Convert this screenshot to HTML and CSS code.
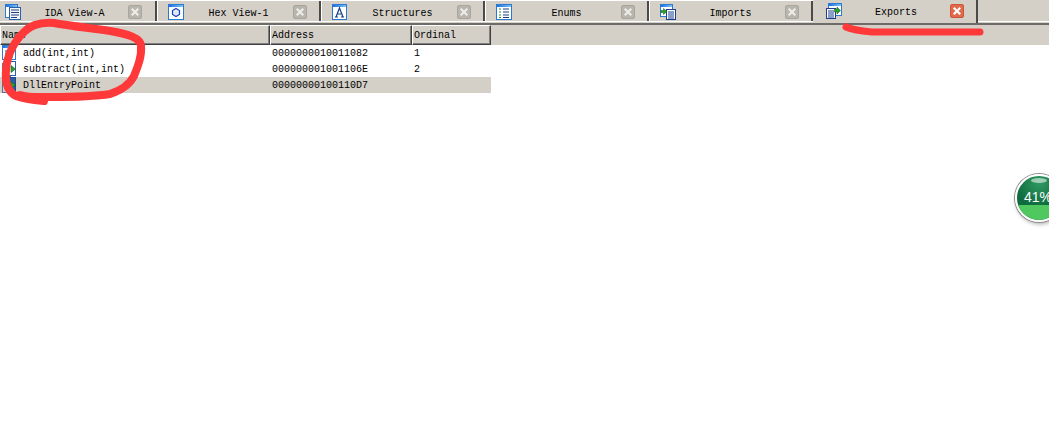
FILE: index.html
```html
<!DOCTYPE html>
<html lang="en">
<head>
<meta charset="utf-8">
<title>Exports</title>
<link rel="stylesheet" href="styles.css">
</head>
<body>
<svg class="defs" width="0" height="0"><defs>
  <linearGradient id="tb" x1="0" x2="1" y1="0" y2="0"><stop offset="0" stop-color="#1f6fe0"/><stop offset="1" stop-color="#7cc4f5"/></linearGradient>
  <symbol id="x" viewBox="0 0 12 12"><path d="M3 3l6 6M9 3l-6 6" stroke="currentColor" stroke-width="2.6" stroke-linecap="square"/></symbol>
</defs></svg>
<div class="tabs">
  <div class="tab first">
    <svg class="ico" viewBox="0 0 16 16"><rect x=".5" y=".5" width="12" height="13" fill="#fff" stroke="#2a7ad0"/><rect x="1" y="1" width="11" height="2" fill="url(#tb)"/><rect x="4.500" y="3.500" width="11" height="12" fill="#f4f8fd" stroke="#2a5fa8"/><path d="M6 6h8M6 8.500h8M6 11h8M6 13.500h6" stroke="#1f3f80"/></svg>
    <span class="label">IDA View-A</span><svg class="close" viewBox="0 0 12 12"><use href="#x"/></svg>
  </div>
  <div class="tab">
    <svg class="ico" viewBox="0 0 16 16"><rect x=".5" y=".5" width="15" height="15" fill="#fff" stroke="#2a7ad0"/><rect x="1" y="1" width="14" height="2" fill="url(#tb)"/><path d="M8 4.500l3.500 2v4L8 12.500l-3.500-2v-4z" fill="#dfe8fb" stroke="#1a3fc0" stroke-width="1.200"/></svg>
    <span class="label">Hex View-1</span><svg class="close" viewBox="0 0 12 12"><use href="#x"/></svg>
  </div>
  <div class="tab">
    <svg class="ico" viewBox="0 0 16 16"><rect x=".5" y=".5" width="14" height="15" fill="#fff" stroke="#2a7ad0"/><rect x="1" y="1" width="13" height="2" fill="url(#tb)"/><path d="M4 13L7.500 4 11 13M5.500 10h4M3 13h3M9 13h3" fill="none" stroke="#14408a" stroke-width="1.200"/></svg>
    <span class="label">Structures</span><svg class="close" viewBox="0 0 12 12"><use href="#x"/></svg>
  </div>
  <div class="tab">
    <svg class="ico" viewBox="0 0 16 16"><rect x=".5" y=".5" width="15" height="15" fill="#fff" stroke="#2a7ad0"/><rect x="1" y="1" width="14" height="2" fill="url(#tb)"/><path d="M3 5h2M3 8h2M3 11h2M3 13.500h2" stroke="#2a8a3a"/><path d="M7 5h6M7 8h6M7 11h6M7 13.500h6" stroke="#14408a"/></svg>
    <span class="label">Enums</span><svg class="close" viewBox="0 0 12 12"><use href="#x"/></svg>
  </div>
  <div class="tab">
    <svg class="ico" viewBox="0 0 16 16"><rect x=".5" y=".5" width="12" height="12" fill="#fff" stroke="#2a7ad0"/><rect x="1" y="1" width="11" height="2" fill="url(#tb)"/><rect x="6.500" y="5.500" width="9" height="10" fill="#fff" stroke="#1a3f8f"/><path d="M8 8h6M8 10h6M8 12h6M8 14h6" stroke="#1a3f8f"/><path d="M1 6.500h2.500V4.500l3.500 3-3.500 3v-2H1z" fill="#2ca02c" stroke="#145a14" stroke-width=".5"/></svg>
    <span class="label">Imports</span><svg class="close" viewBox="0 0 12 12"><use href="#x"/></svg>
  </div>
  <div class="tab active">
    <svg class="ico" viewBox="0 0 16 16"><rect x="2.500" y=".5" width="13" height="12" fill="#fff" stroke="#2a7ad0"/><rect x="3" y="1" width="12" height="2" fill="url(#tb)"/><rect x=".5" y="5.500" width="9" height="10" fill="#fff" stroke="#1a3f8f"/><path d="M2 8h6M2 10h6M2 12h6M2 14h6" stroke="#1a3f8f"/><path d="M8.500 6h2.500V4l3.500 3.500L11 11V9H8.500z" fill="#2ca02c" stroke="#145a14" stroke-width=".5"/></svg>
    <span class="label">Exports</span><svg class="close" viewBox="0 0 12 12"><use href="#x"/></svg>
  </div>
  <div class="tabs-rest"></div>
</div>
<div class="rule"></div>
<div class="table">
  <div class="row head">
    <div class="col name"><span>Name</span></div>
    <div class="col addr"><span>Address</span></div>
    <div class="col ord"><span>Ordinal</span></div>
  </div>
  <div class="row">
    <div class="col name item"><svg class="row-ico" viewBox="0 0 16 16"><rect x=".5" y=".5" width="13" height="14" fill="#fff" stroke="#2a7ad0"/><rect x="1" y="1" width="12" height="2" fill="url(#tb)"/><path d="M3 6h8M3 8h8M3 10h8M3 12h8" stroke="#14408a"/></svg>add(int,int)</div>
    <div class="col addr">0000000010011082</div>
    <div class="col ord">1</div>
  </div>
  <div class="row">
    <div class="col name item"><svg class="row-ico" viewBox="0 0 16 16"><rect x=".5" y="2.500" width="8" height="13" fill="#fff" stroke="#5a6f9a"/><rect x="6.500" y=".5" width="7" height="14" fill="#fff" stroke="#2a5fa8"/><path d="M9 4.500l4.500 3.500L9 11.500z" fill="#2ca02c" stroke="#145a14" stroke-width=".6"/></svg>subtract(int,int)</div>
    <div class="col addr">000000001001106E</div>
    <div class="col ord">2</div>
  </div>
  <div class="row selected">
    <div class="col name item"><svg class="row-ico" viewBox="0 0 16 16"><rect x=".5" y="2.500" width="8" height="13" fill="#d4d0c8" stroke="#5a6f9a"/><rect x="6.500" y=".5" width="7" height="14" fill="#2a5fa8" stroke="#1f4a8a"/><path d="M9 4.500l4.500 3.500L9 11.500z" fill="#2ca02c" stroke="#145a14" stroke-width=".6"/></svg>DllEntryPoint</div>
    <div class="col addr">00000000100110D7</div>
    <div class="col ord"></div>
  </div>
</div>
<svg class="scribble" viewBox="0 0 1049 431">
  <path d="M44 101C34 100 24 99 16 96 8 92 5 82 6 70 7 56 14 42 24 32 32 24 42 22 54 23 70 26 90 28 110 31 128 34 141 38 141 46 142 56 138 66 134 76 130 84 122 90 110 94 92 97 70 97 50 97 40 97 30 98 20 95" fill="none" stroke="#ff3939" stroke-width="8" stroke-linecap="round" stroke-linejoin="round"/>
  <path d="M846 27C852 30 862 31 872 32L980 32" fill="none" stroke="#ff3939" stroke-width="7" stroke-linecap="round"/>
</svg>
<div class="gauge"><div class="gauge-glow"></div><div class="gauge-fill"></div><span class="gauge-text">41%</span></div>
</body>
</html>
```
FILE: styles.css
```css
* { box-sizing: border-box; }
html, body { margin: 0; height: 100%; overflow: hidden; background: #fff; }
body { font-family: "Liberation Mono", monospace; font-size: 10px; color: #000; }
.defs { position: absolute; }
.tabs { display: flex; height: 23px; background: #d4d0c8; }
.tab { width: 164px; height: 22px; display: flex; align-items: center; padding: 2px 14px 0 10px; border-top: 1px solid #fff; border-left: 1px solid #fff; border-bottom: 1px solid #fff; box-shadow: inset -2px 0 0 #4a4a4a; }
.tab.first { width: 157px; padding-left: 5px; padding-right: 15px; border-left: 0; }
.tab.active { width: 165px; height: 23px; border: 0; padding: 0 14px 1px 13px; }
.tabs-rest { flex: 1; height: 22px; border-bottom: 1px solid #fff; }
.ico { width: 16px; height: 16px; flex: none; }
.label { flex: 1; text-align: center; line-height: 12px; padding-top: 3px; }
.close { width: 14px; height: 14px; flex: none; padding: 1px; background: #b8b5ad; border: 1px solid #a8a59e; border-radius: 2px; color: #eeece8; }
.active .close { background: #e2694a; border-color: #cf5538; color: #fff; }
.rule { height: 2px; background: #6e6c68; }
.table { display: flex; flex-direction: column; }
.row { display: flex; height: 16px; line-height: 16px; white-space: pre; }
.row.head { height: 20px; line-height: 19px; background: #d4d0c8; }
.col { flex: none; padding: 1px 0 0 2px; }
.name { width: 270px; display: flex; align-items: flex-start; }
.addr { width: 142px; }
.ord { width: 79px; }
.head .col { padding: 0 0 0 1px; border-right: 1px solid #404040; border-bottom: 1px solid #404040; border-top: 1px solid #fff; border-left: 1px solid #fff; box-shadow: inset -1px -1px 0 #808080; }
.selected .col { background: #d4d0c8; }
.item { gap: 5px; }
.row-ico { width: 16px; height: 16px; flex: none; margin-top: -1px; }
.scribble { position: absolute; inset: 0; width: 1049px; height: 431px; pointer-events: none; }
.gauge { position: absolute; left: 1015px; top: 174px; width: 48px; height: 48px; border-radius: 50%; background: radial-gradient(circle at 50% 15%, #2f9a62, #0f6b3e 55%); border: 2px solid #fff; box-shadow: 0 0 0 1px #8a8a8a, 1px 2px 4px rgba(0,0,0,.35); overflow: hidden; }
.gauge-glow { position: absolute; left: 14px; top: 2px; width: 16px; height: 5px; border-radius: 50%; background: rgba(255,255,255,.55); }
.gauge-fill { position: absolute; left: 0; right: 0; bottom: 0; height: 15px; background: #4fc860; }
.gauge-text { position: absolute; left: 7px; top: 12px; color: #fff; font: 14px/18px "Liberation Sans", sans-serif; }
```
